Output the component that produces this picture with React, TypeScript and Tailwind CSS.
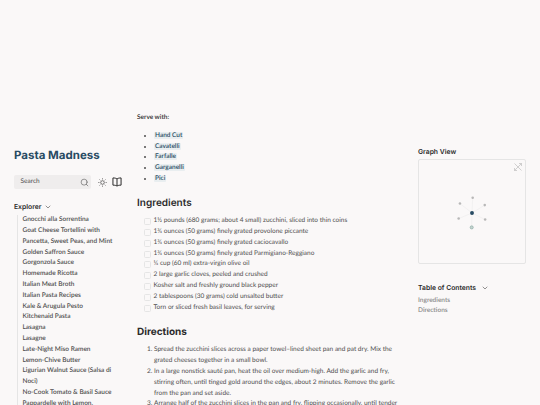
import React from 'react';
import { Search, ChevronDown } from 'lucide-react';

const explorerItems = [
  'Gnocchi alla Sorrentina',
  'Goat Cheese Tortellini with Pancetta, Sweet Peas, and Mint',
  'Golden Saffron Sauce',
  'Gorgonzola Sauce',
  'Homemade Ricotta',
  'Italian Meat Broth',
  'Italian Pasta Recipes',
  'Kale & Arugula Pesto',
  'Kitchenaid Pasta',
  'Lasagna',
  'Lasagne',
  'Late-Night Miso Ramen',
  'Lemon-Chive Butter',
  'Ligurian Walnut Sauce (Salsa di Noci)',
  'No-Cook Tomato & Basil Sauce',
  'Pappardelle with Lemon, Pecorino, and Black Pepper',
];

const shapes = ['Hand Cut', 'Cavatelli', 'Farfalle', 'Garganelli', 'Pici'];

const ingredients = [
  '1½ pounds (680 grams; about 4 small) zucchini, sliced into thin coins',
  '1¾ ounces (50 grams) finely grated provolone piccante',
  '1¾ ounces (50 grams) finely grated caciocavallo',
  '1¾ ounces (50 grams) finely grated Parmigiano-Reggiano',
  '¼ cup (60 ml) extra-virgin olive oil',
  '2 large garlic cloves, peeled and crushed',
  'Kosher salt and freshly ground black pepper',
  '2 tablespoons (30 grams) cold unsalted butter',
  'Torn or sliced fresh basil leaves, for serving',
];

const directions = [
  'Spread the zucchini slices across a paper towel–lined sheet pan and pat dry. Mix the grated cheeses together in a small bowl.',
  'In a large nonstick sauté pan, heat the oil over medium-high. Add the garlic and fry, stirring often, until tinged gold around the edges, about 2 minutes. Remove the garlic from the pan and set aside.',
  'Arrange half of the zucchini slices in the pan and fry, flipping occasionally, until tender and browned in spots, about 6 minutes.',
];

const headingFont = "font-['Inter',sans-serif]";

const GraphDots = () => (
  <svg viewBox="0 0 108 105" className="h-full w-full">
    <g stroke="#e5e5e5" strokeWidth="0.4">
      <line x1="54" y1="54" x2="54.7" y2="38.4" />
      <line x1="54" y1="54" x2="41.7" y2="44.4" />
      <line x1="54" y1="54" x2="67" y2="46" />
      <line x1="54" y1="54" x2="40.4" y2="59.7" />
      <line x1="54" y1="54" x2="67.4" y2="60.7" />
      <line x1="54" y1="54" x2="53.7" y2="68.7" />
    </g>
    <g fill="#b8b8b8">
      <circle cx="54.7" cy="38.4" r="1.3" />
      <circle cx="41.7" cy="44.4" r="1.3" />
      <circle cx="67" cy="46" r="1.3" />
      <circle cx="40.4" cy="59.7" r="1.3" />
      <circle cx="67.4" cy="60.7" r="1.3" />
    </g>
    <circle cx="53.7" cy="68.7" r="1.6" fill="#c5d4d0" stroke="#84a59d" strokeWidth="0.6" />
    <circle cx="54" cy="54" r="2" fill="#284b63" />
  </svg>
);

const GlobalIcon = () => (
  <svg viewBox="0 0 16 16" className="h-[8px] w-[8px]" fill="none" stroke="#bdbdbd" strokeWidth="1.4">
    <path d="M1 1l14 14M15 1L1 15M10 1h5v5M1 10v5h5" />
  </svg>
);

const SunIcon = () => (
  <svg viewBox="0 0 16 16" className="h-[9px] w-[9px]" fill="none" stroke="#2b2b2b" strokeWidth="1.1">
    <circle cx="8" cy="8" r="3.2" />
    <path d="M8 0.5v2M8 13.5v2M0.5 8h2M13.5 8h2M2.7 2.7l1.4 1.4M11.9 11.9l1.4 1.4M2.7 13.3l1.4-1.4M11.9 4.1l1.4-1.4" />
  </svg>
);

const BookIcon = () => (
  <svg viewBox="0 0 16 16" className="h-[10px] w-[10px]" fill="none" stroke="#2b2b2b" strokeWidth="1.6">
    <path d="M8 3C6.5 2 4.5 1.5 1.5 1.5v11.5c3 0 5 .5 6.5 1.5 1.5-1 3.5-1.5 6.500-1.500V1.500C11.500 1.500 9.500 2 8 3zM8 3v11.500" />
  </svg>
);

export default function App() {
  return (
    <div className="flex h-[405px] w-[540px] overflow-hidden bg-[#faf8f8] font-['Lato',sans-serif] text-[6.5px] leading-[10.8px] text-[#4e4e4e] [text-rendering:geometricPrecision]">
      {/* Left sidebar */}
      <aside className="w-[137px] shrink-0 pl-[14px] pt-[147px]">
        <h1 className={`${headingFont} text-[11.5px] leading-[16px] font-bold text-[#284b63]`}>Pasta Madness</h1>
        <div className="mt-[12px] flex items-center">
          <div className="flex h-[14px] w-[77px] items-center justify-between rounded-[2px] bg-[#efeded] pl-[6.5px] pr-[2px]">
            <span className="pt-[1px] text-[#4e4e4e]">Search</span>
            <Search className="h-[9px] w-[9px] text-[#4e4e4e]" strokeWidth={1.5} />
          </div>
          <div className="ml-[7px] flex items-center gap-[5px]">
            <SunIcon />
            <BookIcon />
          </div>
        </div>
        <div className={`mt-[12.5px] flex items-center gap-[3px] ${headingFont} text-[6.8px] font-semibold text-[#2b2b2b]`}>
          Explorer
          <ChevronDown className="h-[8px] w-[8px] text-[#2b2b2b]" strokeWidth={1.5} />
        </div>
        <ul className="ml-[2.5px] mt-[3px] w-[100px] border-l border-[#e5e5e5] pl-[5px] font-semibold">
          {explorerItems.map((item) => (
            <li key={item}>{item}</li>
          ))}
        </ul>
      </aside>

      {/* Main article */}
      <main className="w-[263px] shrink-0 pt-[112.5px]">
        <p className="font-semibold text-[#2b2b2b]">Serve with:</p>
        <ul className="mt-[7.5px] list-disc pl-[17px] marker:text-[#4e4e4e]">
          {shapes.map((shape) => (
            <li key={shape}>
              <span className="rounded-[1px] bg-[#e9eef0] px-[1px] font-semibold text-[#284b63]">{shape}</span>
            </li>
          ))}
        </ul>
        <h2 className={`${headingFont} mt-[11px] text-[10px] leading-[14px] font-semibold text-[#2b2b2b]`}>Ingredients</h2>
        <ul className="mt-[6.5px] pl-[7px]">
          {ingredients.map((item) => (
            <li key={item} className="flex items-center gap-[2.5px]">
              <span className="h-[7px] w-[7px] shrink-0 rounded-[1.5px] border-[0.5px] border-[#e5e5e5]" />
              {item}
            </li>
          ))}
        </ul>
        <h2 className={`${headingFont} mt-[11.5px] text-[10px] leading-[14px] font-bold text-[#2b2b2b]`}>Directions</h2>
        <ol className="mt-[6.5px] list-decimal pl-[17px]">
          {directions.map((item) => (
            <li key={item}>{item}</li>
          ))}
        </ol>
      </main>

      {/* Right sidebar */}
      <aside className="ml-[18px] w-[109px] shrink-0 pt-[147px]">
        <h3 className={`${headingFont} text-[6.8px] leading-[10px] font-semibold text-[#2b2b2b]`}>Graph View</h3>
        <div className="relative mt-[2px] h-[105px] w-[108px] rounded-[2px] border-[0.5px] border-[#e5e5e5]">
          <GraphDots />
          <span className="absolute right-[3px] top-[3px]">
            <GlobalIcon />
          </span>
        </div>
        <div className={`mt-[18.5px] flex items-center gap-[5px] ${headingFont} text-[6.8px] leading-[10px] font-semibold text-[#2b2b2b]`}>
          Table of Contents
          <ChevronDown className="h-[8px] w-[8px]" strokeWidth={1.5} />
        </div>
        <ul className="mt-[3px] font-semibold text-[#8a8a8a]">
          <li>Ingredients</li>
          <li>Directions</li>
        </ul>
      </aside>
    </div>
  );
}
